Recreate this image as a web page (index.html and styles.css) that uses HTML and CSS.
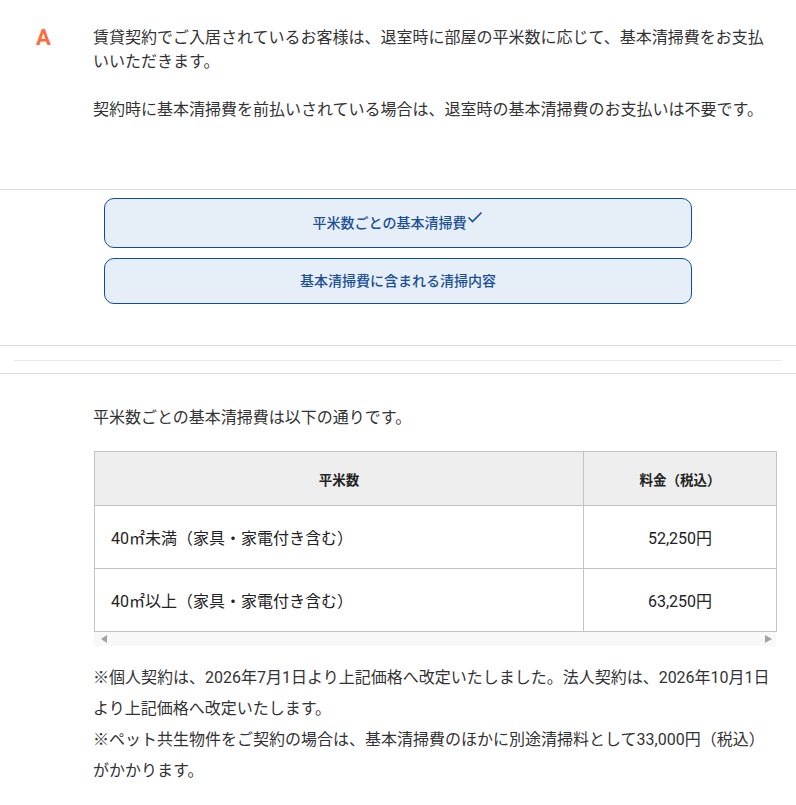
FILE: index.html
```html
<!DOCTYPE html>
<html lang="ja">
<head>
<meta charset="utf-8">
<link rel="stylesheet" href="styles.css">
</head>
<body>
<section class="answer">
  <div class="answer-mark">A</div>
  <div class="answer-body">
    <p>賃貸契約でご入居されているお客様は、退室時に部屋の平米数に応じて、基本清掃費をお支払いいただきます。</p>
    <p>契約時に基本清掃費を前払いされている場合は、退室時の基本清掃費のお支払いは不要です。</p>
  </div>
</section>

<section class="tabs">
  <button class="tab tab-active" type="button">平米数ごとの基本清掃費<span class="check"><svg width="16" height="12" viewBox="0 0 16 12"><path d="M1.5 6.5 L5.5 10.5 L14.5 1.5" fill="none" stroke="#1a4f97" stroke-width="1.6"/></svg></span></button>
  <button class="tab" type="button">基本清掃費に含まれる清掃内容</button>
</section>

<div class="divider-block">
  <div class="divider-inner"></div>
</div>

<section class="content">
  <p class="lead">平米数ごとの基本清掃費は以下の通りです。</p>
  <div class="table-wrap">
    <table class="price-table">
      <thead>
        <tr><th class="col-area">平米数</th><th class="col-price">料金（税込）</th></tr>
      </thead>
      <tbody>
        <tr><td class="cell-area">40㎡未満（家具・家電付き含む）</td><td class="cell-price">52,250円</td></tr>
        <tr><td class="cell-area">40㎡以上（家具・家電付き含む）</td><td class="cell-price">63,250円</td></tr>
      </tbody>
    </table>
    <div class="scrollbar">
      <span class="arrow arrow-left"></span>
      <span class="arrow arrow-right"></span>
    </div>
  </div>
  <p class="note">※個人契約は、2026年7月1日より上記価格へ改定いたしました。法人契約は、2026年10月1日より上記価格へ改定いたします。<br>※ペット共生物件をご契約の場合は、基本清掃費のほかに別途清掃料として33,000円（税込）がかかります。</p>
</section>
</body>
</html>
```

FILE: styles.css
```css
* { box-sizing: border-box; }
html, body { margin: 0; padding: 0; background: #fff; }
body {
  font-family: Roboto, "Noto Sans CJK JP", sans-serif;
  color: #333;
  width: 796px;
}
p { margin: 0; }

.answer {
  display: flex;
  padding: 26px 20px 0 36px;
  height: 189px;
}
.answer-mark {
  width: 57px;
  flex: none;
  color: #ff6b3b;
  font-size: 22px;
  font-weight: 700;
  line-height: 30px;
  margin-top: -3px;
  font-family: Roboto, sans-serif;
}
.answer-body {
  width: 680px;
  font-size: 16px;
  line-height: 24px;
}
.answer-body p + p { margin-top: 24px; }

.tabs {
  border-top: 1px solid #dedede;
  padding: 8px 0 41px;
  display: flex;
  flex-direction: column;
  align-items: center;
  gap: 10px;
}
.tab {
  width: 588px;
  height: 46px;
  border: 1.5px solid #0e4c9c;
  border-radius: 10px;
  background: #e6eef8;
  color: #1a4f97;
  font-family: Roboto, "Noto Sans CJK JP", sans-serif;
  font-size: 14px;
  font-weight: 500;
  line-height: 20px;
  padding: 0;
  display: flex;
  align-items: center;
  justify-content: center;
}
.tab-active { height: 50px; }
.check {
  display: inline-block;
  position: relative;
  top: -6px;
  margin-left: 1px;
  width: 16px;
  height: 12px;
}
.check svg { display: block; }

.divider-block {
  border-top: 1px solid #dedede;
  border-bottom: 1px solid #dedede;
  height: 29px;
  padding: 14px 14px 0;
}
.divider-inner {
  border-top: 1px solid #e8e8e8;
}

.content {
  padding: 32px 0 40px 93px;
}
.lead {
  font-size: 16px;
  line-height: 24px;
  margin-bottom: 21px;
}
.table-wrap {
  width: 682px;
  margin-left: 1px;
}
.price-table {
  width: 682px;
  border-collapse: collapse;
  table-layout: fixed;
}
.price-table th,
.price-table td {
  border: 1px solid #c3c3c3;
}
.price-table th {
  background: #eeeeee;
  height: 54px;
  font-size: 13.5px;
  font-weight: 700;
  color: #222;
  text-align: center;
}
.col-area { width: 489px; }
.col-price { width: 193px; }
.price-table td {
  height: 63px;
  font-size: 16px;
  color: #222;
}
.cell-area { padding-left: 16px; }
.cell-price { text-align: center; }

.scrollbar {
  height: 14px;
  background: #f8f8f8;
  display: flex;
  justify-content: space-between;
  align-items: center;
  padding: 0 4px 0 7px;
}
.arrow {
  width: 0;
  height: 0;
  border-top: 4.5px solid transparent;
  border-bottom: 4.5px solid transparent;
}
.arrow-left { border-right: 6px solid #a3a3a3; }
.arrow-right { border-left: 7px solid #a3a3a3; }

.note {
  margin-top: 16px;
  width: 679px;
  font-size: 16px;
  line-height: 31px;
}
```
